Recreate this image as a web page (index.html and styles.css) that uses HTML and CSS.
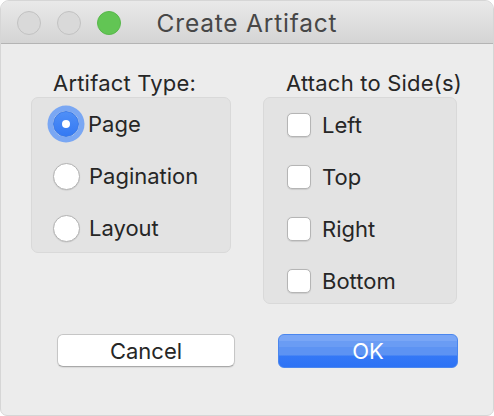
FILE: index.html
```html
<!DOCTYPE html>
<html>
<head>
<meta charset="utf-8">
<link rel="stylesheet" href="styles.css">
</head>
<body>
<div class="window">
  <div class="titlebar">
    <div class="lights">
      <span class="light off"></span>
      <span class="light off"></span>
      <span class="light green"></span>
    </div>
    <div class="title">Create Artifact</div>
    <div></div>
  </div>
  <div class="content">
    <div class="groups">
      <div class="group group-type">
        <div class="group-label">Artifact Type:</div>
        <div class="box box-type">
          <div class="row"><span class="radio selected"><span class="dot"></span></span><span class="row-label">Page</span></div>
          <div class="row"><span class="radio"></span><span class="row-label">Pagination</span></div>
          <div class="row"><span class="radio"></span><span class="row-label">Layout</span></div>
        </div>
      </div>
      <div class="group group-side">
        <div class="group-label">Attach to Side(s)</div>
        <div class="box box-side">
          <div class="row"><span class="check"></span><span class="row-label">Left</span></div>
          <div class="row"><span class="check"></span><span class="row-label">Top</span></div>
          <div class="row"><span class="check"></span><span class="row-label">Right</span></div>
          <div class="row"><span class="check"></span><span class="row-label">Bottom</span></div>
        </div>
      </div>
    </div>
    <div class="buttons">
      <button class="btn cancel">Cancel</button>
      <button class="btn ok">OK</button>
    </div>
  </div>
</div>
</body>
</html>
```

FILE: styles.css
```css
* { box-sizing: border-box; }
html, body { margin: 0; padding: 0; background: #ffffff; }
body {
  font-family: Inter, "Liberation Sans", sans-serif;
  color: #262626;
}
.window {
  width: 494px;
  height: 416px;
  background: #ececec;
  border: 1px solid #d6d6d6;
  border-radius: 9px 9px 7px 7px;
  overflow: hidden;
}
.titlebar {
  height: 43px;
  display: grid;
  grid-template-columns: 1fr auto 1fr;
  align-items: center;
  background: linear-gradient(#e9e9e9, #d4d4d4);
  border-bottom: 1px solid #b4b4b4;
}
.lights {
  display: flex;
  gap: 16px;
  padding-left: 16px;
  padding-top: 1px;
}
.light {
  width: 24px;
  height: 24px;
  border-radius: 50%;
  display: block;
}
.light.off {
  background: #d9d9d9;
  border: 1px solid #c2c2c2;
}
.light.green {
  background: #62c554;
  border: 1px solid #58b84b;
}
.title {
  font-size: 24.5px;
  letter-spacing: 0.8px;
  color: #474747;
  padding-top: 1px;
}
.content {
  padding-top: 26px;
}
.groups {
  display: flex;
  gap: 32px;
  padding-left: 30px;
  align-items: flex-start;
}
.group-label {
  font-size: 22px;
  line-height: 26px;
  margin-bottom: 1px;
  letter-spacing: 0.2px;
}
.group-type .group-label { padding-left: 22px; }
.group-side .group-label { padding-left: 23px; }
.box {
  background: #e3e3e3;
  border: 1px solid #d9d9d9;
  border-radius: 7px;
}
.box-type { width: 200px; height: 156px; padding-left: 21px; }
.box-side { width: 194px; height: 207px; padding-left: 23px; padding-top: 1px; }
.row {
  height: 52px;
  flex: none;
  display: flex;
  align-items: center;
}
.row-label {
  font-size: 22px;
}
.radio {
  width: 27px;
  height: 27px;
  border-radius: 50%;
  background: #ffffff;
  border: 1px solid #b3b3b3;
  box-shadow: 0 0.5px 1px rgba(0,0,0,0.12);
  margin-right: 9px;
  flex: none;
  display: flex;
  align-items: center;
  justify-content: center;
}
.radio.selected {
  background: linear-gradient(#4f8ff7, #3479f3);
  border: 1px solid #3a7ae8;
  box-shadow: 0 0 0 5.5px #7aa7f3;
  width: 26px;
  height: 26px;
  margin-left: 0;
}
.dot {
  width: 8px;
  height: 8px;
  border-radius: 50%;
  background: #ffffff;
}
.check {
  width: 24px;
  height: 24px;
  border-radius: 5px;
  background: #ffffff;
  border: 1px solid #b5b5b5;
  box-shadow: 0 0.5px 1px rgba(0,0,0,0.1);
  margin-right: 11px;
  flex: none;
}
.buttons {
  display: flex;
  gap: 43px;
  padding-left: 56px;
  margin-top: 30px;
}
.btn {
  font-family: Inter, "Liberation Sans", sans-serif;
  font-size: 22px;
  height: 34px;
  border-radius: 6px;
  padding: 0;
  display: flex;
  align-items: center;
  justify-content: center;
}
.cancel {
  width: 178px;
  height: 33px;
  background: #ffffff;
  color: #262626;
  border: 1px solid #c6c6c6;
  border-bottom-color: #a9a9a9;
  box-shadow: 0 1px 1px rgba(0,0,0,0.08);
}
.ok {
  width: 180px;
  color: #ffffff;
  border: 1px solid #4a86ee;
  background: linear-gradient(#79a6f6 0, #79a6f6 6px, #6a9cf4 6px, #6a9cf4 12px, #5d93f3 12px, #5d93f3 20px, #3478f6 21px, #2d72f5 100%);
}
```
